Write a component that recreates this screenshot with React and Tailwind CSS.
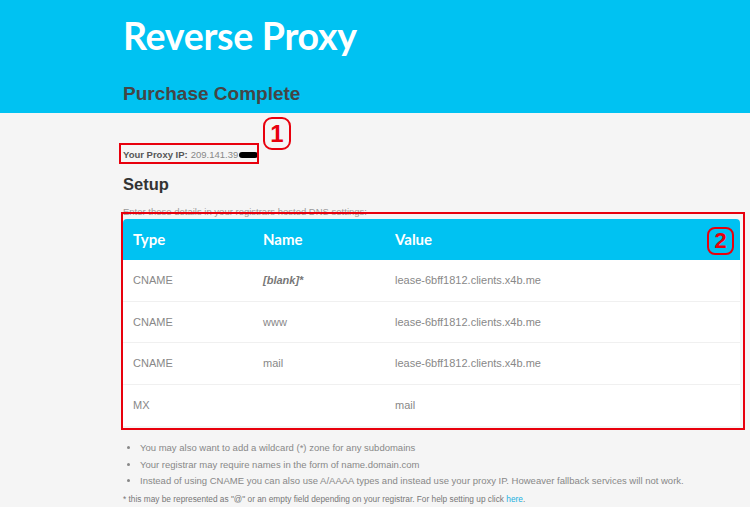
import { useState } from "react";

const records = [
  { type: "CNAME", name: "[blank]*", value: "lease-6bff1812.clients.x4b.me", blank: true },
  { type: "CNAME", name: "www", value: "lease-6bff1812.clients.x4b.me" },
  { type: "CNAME", name: "mail", value: "lease-6bff1812.clients.x4b.me" },
  { type: "MX", name: "", value: "mail" },
];

const notes = [
  "You may also want to add a wildcard (*) zone for any subdomains",
  "Your registrar may require names in the form of name.domain.com",
  "Instead of using CNAME you can also use A/AAAA types and instead use your proxy IP. Howeaver fallback services will not work.",
];

export default function App() {
  const [ip] = useState("209.141.39");

  return (
    <div className="relative min-h-[507px] bg-[#f5f5f5] font-['Liberation_Sans',Arial,sans-serif] overflow-hidden">
      {/* Header */}
      <div className="bg-[#00c2f2] h-[113px] pl-[123px] pt-[12px]">
        <h1 className="font-['Lato',sans-serif] font-bold text-white text-[37.5px] leading-[48px] tracking-[-0.3px]">
          Reverse Proxy
        </h1>
        <h2 className="mt-[22px] font-bold text-[#454545] text-[19px] leading-[24px]">Purchase Complete</h2>
      </div>

      <div className="pl-[123px] pr-[10px]">
        <p className="mt-[35px] text-[9.5px] leading-[14px] text-[#888] flex items-center">
          <span className="font-bold text-[#555]">Your Proxy IP:</span>
          <span className="ml-[3px]">{ip}</span>
          <span className="inline-block w-[19px] h-[6px] rounded-full bg-black ml-[1px]" />
        </p>

        <h3 className="mt-[12px] font-bold text-[#333] text-[16.5px] leading-[20px]">Setup</h3>

        <p className="mt-[12px] text-[9.5px] leading-[12px] text-[#999]">
          Enter these details in your registrars hosted DNS settings:
        </p>

        <div className="mt-[1px] w-[617px]">
          <div className="bg-[#00c2f2] rounded-t-[4px] h-[41px] flex items-center text-white font-['Lato',sans-serif] font-bold text-[15px]">
            <div className="w-[130px] pl-[10px]">Type</div>
            <div className="w-[132px] pl-[10px]">Name</div>
            <div className="pl-[10px]">Value</div>
          </div>
          <div className="bg-white">
            {records.map((r, i) => (
              <div
                key={i}
                className="h-[41.5px] flex items-center text-[11px] text-[#888] border-b border-[#f0f0f0] last:border-b-0"
              >
                <div className="w-[130px] pl-[10px]">{r.type}</div>
                <div className={r.blank ? "w-[132px] pl-[10px] italic font-bold text-[#777]" : "w-[132px] pl-[10px]"}>
                  {r.name}
                </div>
                <div className="pl-[10px]">{r.value}</div>
              </div>
            ))}
          </div>
        </div>

        <ul className="mt-[14px] pl-[17px] list-disc text-[9.5px] leading-[16.5px] text-[#888] marker:text-[#888]">
          {notes.map((n) => (
            <li key={n}>{n}</li>
          ))}
        </ul>

        <p className="mt-[3px] text-[8.3px] leading-[12px] text-[#777]">
          * this may be represented as "@" or an empty field depending on your registrar. For help setting up click{" "}
          <a className="text-[#1ab0e0]">here</a>.
        </p>
      </div>

      {/* Annotations */}
      <div className="absolute left-[119px] top-[143px] w-[140px] h-[21px] border-2 border-[#e8000d]" />
      <div className="absolute left-[263px] top-[117px] w-[28px] h-[33px] border-2 border-[#e8000d] rounded-[9px] flex items-center justify-center text-[#e8000d] font-bold text-[24px] leading-none">
        1
      </div>
      <div className="absolute left-[121px] top-[212px] w-[624px] h-[218px] border-2 border-[#e8000d]" />
      <div className="absolute left-[707px] top-[227px] w-[27px] h-[28px] border-2 border-[#e8000d] rounded-[8px] flex items-center justify-center text-[#e8000d] font-bold text-[22px] leading-none">
        2
      </div>
    </div>
  );
}
